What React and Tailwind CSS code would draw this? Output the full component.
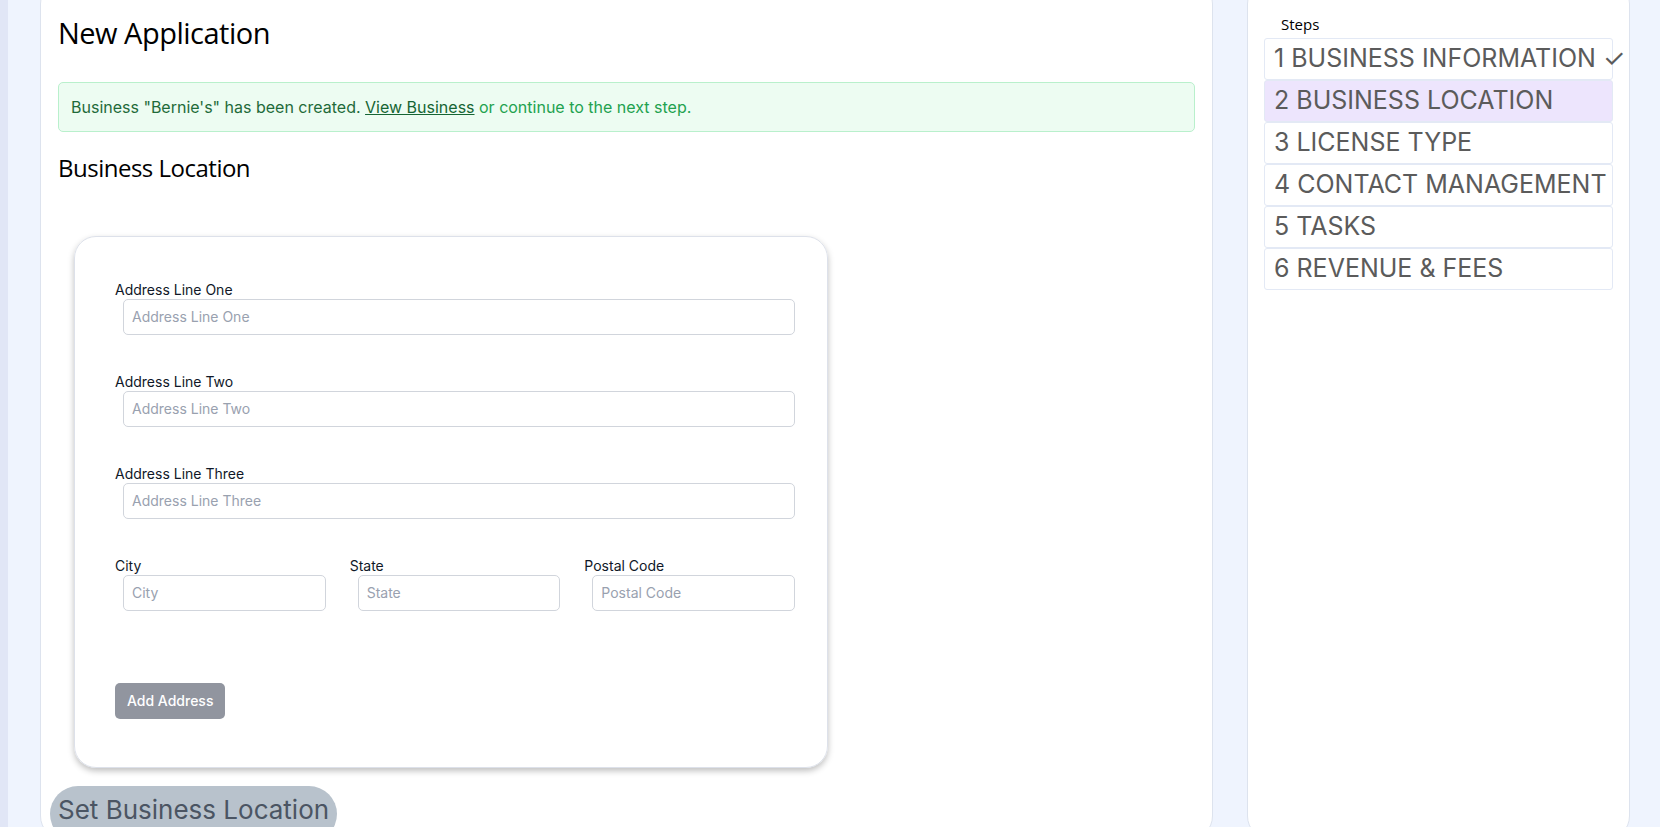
import React from "react";

const steps = [
  { label: "1 BUSINESS INFORMATION ✓" },
  { label: "2 BUSINESS LOCATION", active: true },
  { label: "3 LICENSE TYPE" },
  { label: "4 CONTACT MANAGEMENT" },
  { label: "5 TASKS" },
  { label: "6 REVENUE & FEES" },
];

const poppins = { fontFamily: "Inter, 'Noto Sans', sans-serif" };

function Field({ label, className = "" }) {
  return (
    <div className={className}>
      <div className="text-[14px] text-gray-900 h-[20px]">{label}</div>
      <input
        placeholder={label}
        className="mt-[0px] ml-[8px] w-[calc(100%-8px)] h-[36px] rounded-[5px] border border-gray-300 px-[8px] text-[14px] placeholder:text-gray-400 outline-none"
      />
    </div>
  );
}

export default function App() {
  return (
    <div className="w-[1660px] h-[827px] overflow-hidden flex bg-[#eff4fe]" style={poppins}>
      <div className="w-[8px] bg-[#e1e6f6]" />
      <div className="w-[32px]" />
      <div className="w-[1173px] h-[860px] -mt-[20px] bg-white rounded-[24px] border border-[#dde3ee] px-[17px] pt-[30px]">
        <h1 className="text-[29px] text-black" style={{ fontFamily: "'Open Sans', sans-serif", letterSpacing: "-0.5px" }}>
          New Application
        </h1>
        <div className="mt-[27px] h-[50px] rounded-[5px] border border-[#b9f0cc] bg-[#edfcf2] px-[12px] flex items-center text-[16px] text-[#16803d]">
          <span className="text-[#1f6b3a]">Business "Bernie's" has been created.&nbsp;</span>
          <span className="underline text-[#166534]">View Business</span>
          <span className="text-[#22a24f]">&nbsp;or continue to the next step.</span>
        </div>
        <h2 className="mt-[18px] text-[24px] text-black" style={{ fontFamily: "'Open Sans', sans-serif", letterSpacing: "-0.5px" }}>
          Business Location
        </h2>
        <div className="ml-[16px] mt-[50px] w-[754px] h-[532px] rounded-[22px] border border-[#dde1ea] shadow-[0_3px_6px_rgba(0,0,0,0.25)] pl-[40px] pr-[32px] pt-[42px]">
          <div className="flex flex-col gap-[36px]">
            <Field label="Address Line One" />
            <Field label="Address Line Two" />
            <Field label="Address Line Three" />
            <div className="flex gap-[24px]">
              <Field label="City" className="flex-1" />
              <Field label="State" className="flex-1" />
              <Field label="Postal Code" className="flex-1" />
            </div>
          </div>
          <button className="mt-[72px] h-[36px] px-[12px] rounded-[5px] bg-[#91959f] text-white text-[14px] font-medium">
            Add Address
          </button>
        </div>
        <button className="-ml-[8px] mt-[18px] h-[56px] px-[8px] rounded-full bg-[#b8c2cc] text-[26px] text-[#4b5563] pb-[8px]">
          Set Business Location
        </button>
      </div>
      <div className="w-[34px]" />
      <div className="w-[383px] h-[860px] -mt-[20px] bg-white rounded-[24px] border border-[#dde3ee] pt-[32px] px-[16px]">
        <div className="ml-[17px] text-[15px] text-black" style={{ fontFamily: "'Open Sans', sans-serif" }}>Steps</div>
        <div className="mt-[2px] flex flex-col">
          {steps.map((s) => (
            <div
              key={s.label}
              className={`h-[42px] flex items-center px-[9px] rounded-[3px] border border-[#e3e9f5] text-[25px] text-[#5b5b5b] whitespace-nowrap ${s.active ? "bg-[#ede5fd]" : "bg-white"}`}
            >
              {s.label}
            </div>
          ))}
        </div>
      </div>
    </div>
  );
}
